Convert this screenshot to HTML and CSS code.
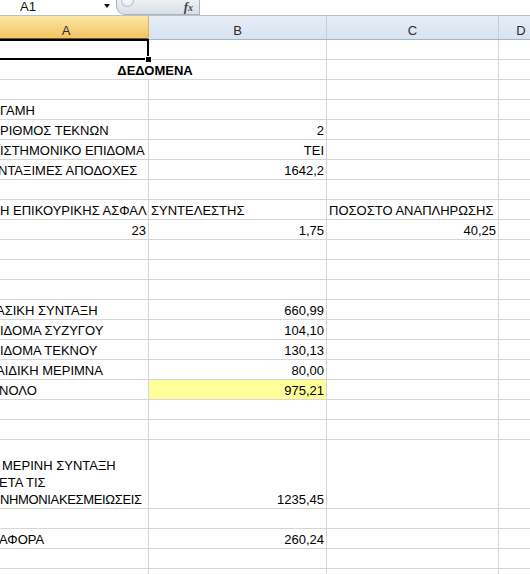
FILE: index.html
```html
<!DOCTYPE html>
<html lang="el">
<head>
<meta charset="utf-8">
<title>ΔΕΔΟΜΕΝΑ</title>
<link rel="stylesheet" href="styles.css">
</head>
<body>
<div class="formula-bar">
  <div class="namebox"><span class="name">A1</span><span class="arrow"></span></div>
  <div class="fx-cap"><span class="knob"></span><span class="fx">f<span class="fx-x">x</span></span></div>
  <div class="formula-input"></div>
</div>
<div class="sheet">
  <div class="hdr-row">
    <div class="hdr sel">A</div><div class="hdr">B</div><div class="hdr">C</div><div class="hdr">D</div>
  </div>
  <div class="row"><div class="c a1cell"><span class="selbox"></span><span class="handle"></span></div><div class="c"></div><div class="c"></div><div class="c"></div></div>
  <div class="row"><div class="c merged">ΔΕΔΟΜΕΝΑ</div><div class="c"></div><div class="c"></div></div>
  <div class="row"><div class="c"></div><div class="c"></div><div class="c"></div><div class="c"></div></div>
  <div class="row"><div class="c a0">ΓΑΜΗ</div><div class="c"></div><div class="c"></div><div class="c"></div></div>
  <div class="row"><div class="c a0">ΡΙΘΜΟΣ ΤΕΚΝΩΝ</div><div class="c r">2</div><div class="c"></div><div class="c"></div></div>
  <div class="row"><div class="c a0">ΙΣΤΗΜΟΝΙΚΟ ΕΠΙΔΟΜΑ</div><div class="c r">ΤΕΙ</div><div class="c"></div><div class="c"></div></div>
  <div class="row"><div class="c am2">ΝΤΑΞΙΜΕΣ ΑΠΟΔΟΧΕΣ</div><div class="c r">1642,2</div><div class="c"></div><div class="c"></div></div>
  <div class="row"><div class="c"></div><div class="c"></div><div class="c"></div><div class="c"></div></div>
  <div class="row"><div class="c a0">Η ΕΠΙΚΟΥΡΙΚΗΣ ΑΣΦΑΛ</div><div class="c">ΣΥΝΤΕΛΕΣΤΗΣ</div><div class="c">ΠΟΣΟΣΤΟ ΑΝΑΠΛΗΡΩΣΗΣ</div><div class="c"></div></div>
  <div class="row"><div class="c r">23</div><div class="c r">1,75</div><div class="c r">40,25</div><div class="c"></div></div>
  <div class="row"><div class="c"></div><div class="c"></div><div class="c"></div><div class="c"></div></div>
  <div class="row"><div class="c"></div><div class="c"></div><div class="c"></div><div class="c"></div></div>
  <div class="row"><div class="c"></div><div class="c"></div><div class="c"></div><div class="c"></div></div>
  <div class="row"><div class="c am4">ΑΣΙΚΗ ΣΥΝΤΑΞΗ</div><div class="c r">660,99</div><div class="c"></div><div class="c"></div></div>
  <div class="row"><div class="c a0">ΙΔΟΜΑ ΣΥΖΥΓΟΥ</div><div class="c r">104,10</div><div class="c"></div><div class="c"></div></div>
  <div class="row"><div class="c a0">ΙΔΟΜΑ ΤΕΚΝΟΥ</div><div class="c r">130,13</div><div class="c"></div><div class="c"></div></div>
  <div class="row"><div class="c am4">ΑΙΔΙΚΗ ΜΕΡΙΜΝΑ</div><div class="c r">80,00</div><div class="c"></div><div class="c"></div></div>
  <div class="row"><div class="c am1">ΝΟΛΟ</div><div class="c r fill">975,21</div><div class="c"></div><div class="c"></div></div>
  <div class="row"><div class="c"></div><div class="c"></div><div class="c"></div><div class="c"></div></div>
  <div class="row"><div class="c"></div><div class="c"></div><div class="c"></div><div class="c"></div></div>
  <div class="row tall"><div class="c a0 wrap"><span class="l1">ΜΕΡΙΝΗ ΣΥΝΤΑΞΗ</span><span class="l2">ΕΤΑ ΤΙΣ</span><span class="l3">ΝΗΜΟΝΙΑΚΕΣΜΕΙΩΣΕΙΣ</span></div><div class="c r">1235,45</div><div class="c"></div><div class="c"></div></div>
  <div class="row"><div class="c"></div><div class="c"></div><div class="c"></div><div class="c"></div></div>
  <div class="row"><div class="c am1">ΑΦΟΡΑ</div><div class="c r">260,24</div><div class="c"></div><div class="c"></div></div>
  <div class="row"><div class="c"></div><div class="c"></div><div class="c"></div><div class="c"></div></div>
  <div class="row"><div class="c"></div><div class="c"></div><div class="c"></div><div class="c"></div></div>
</div>
</body>
</html>
```
FILE: styles.css
```css
html, body {
  margin: 0;
  padding: 0;
}
body {
  width: 530px;
  height: 574px;
  overflow: hidden;
  background: #fff;
  font-family: "Liberation Sans", Arial, sans-serif;
  font-size: 13px;
  color: #000;
}

/* formula bar */
.formula-bar {
  display: flex;
  height: 16px;
  box-sizing: border-box;
  border-bottom: 1px solid #b9c2cc;
  background: #fff;
}
.namebox {
  width: 116px;
  display: flex;
  align-items: flex-start;
  box-sizing: border-box;
  padding-left: 20px;
}
.name {
  line-height: 14px;
  font-size: 13px;
  color: #111;
}
.arrow {
  margin-left: auto;
  margin-right: 6px;
  margin-top: 4px;
  width: 0;
  height: 0;
  border-left: 3.5px solid transparent;
  border-right: 3.5px solid transparent;
  border-top: 4px solid #111;
}
.fx-cap {
  position: relative;
  width: 84px;
  height: 15px;
  box-sizing: border-box;
  background: linear-gradient(#eef1f4, #d9dfe6);
  border: 1px solid #aab4c0;
  border-top: none;
  border-radius: 0 0 0 9px;
  display: flex;
  justify-content: flex-end;
  align-items: flex-start;
}
.knob {
  position: absolute;
  left: 4px;
  top: -5px;
  width: 11px;
  height: 10px;
  border-radius: 50%;
  background: radial-gradient(circle at 50% 40%, #fdfdfd, #dfe4ea);
  border: 1px solid #b9c2cc;
}
.fx {
  font-family: "Liberation Serif", "Times New Roman", serif;
  font-style: italic;
  font-weight: bold;
  font-size: 13px;
  line-height: 13px;
  color: #3e4752;
  margin-right: 6px;
}
.fx-x {
  font-size: 10px;
}
.formula-input {
  flex: 1;
}

/* sheet */
.sheet {
  margin-left: -16px;
  width: 560px;
}
.hdr-row,
.row {
  display: grid;
  grid-template-columns: 165px 178px 172px 1fr;
}
.hdr-row {
  height: 24px;
  background: linear-gradient(#e6edf7, #d8e3f0);
  border-bottom: 1px solid #9eb6ce;
  box-sizing: border-box;
}
.hdr {
  display: flex;
  justify-content: center;
  align-items: flex-end;
  line-height: 17px;
  font-size: 13px;
  color: #2b2b2b;
  border-right: 1px solid #c0cfdf;
}
.hdr.sel {
  background: linear-gradient(#fbe6a6, #f3c360);
  border-right: 1px solid #d9b25a;
  box-shadow: inset 0 -1px 0 #6d5a2c;
}
.row {
  height: 20px;
}
.row.tall {
  height: 69px;
}
.c {
  position: relative;
  box-sizing: border-box;
  border-right: 1px solid #d6d6d6;
  border-bottom: 1px solid #d6d6d6;
  display: flex;
  align-items: flex-end;
  line-height: 17px;
  padding: 0 2px;
  overflow: hidden;
  white-space: nowrap;
}
.c.r {
  justify-content: flex-end;
}
.c.merged {
  grid-column: span 2;
  justify-content: center;
  font-weight: bold;
}
.c.fill {
  background: #ffff99;
}
.c.a0 { padding-left: 16px; }
.c.am1 { padding-left: 15px; }
.c.am2 { padding-left: 14px; }
.c.am4 { padding-left: 12px; }
.c.wrap {
  flex-direction: column;
  justify-content: flex-end;
  align-items: flex-start;
}
.c.wrap .l1 { padding-left: 2px; }
.c.wrap .l2 { margin-left: -1px; }
.c.wrap .l3 { letter-spacing: -0.35px; }

/* selection of A1 */
.c.a1cell {
  overflow: visible;
  z-index: 2;
}
.selbox {
  position: absolute;
  left: -3px;
  top: -1px;
  width: 168px;
  height: 21px;
  box-sizing: border-box;
  border: 2px solid #000;
}
.handle {
  position: absolute;
  left: 161px;
  top: 16px;
  width: 7px;
  height: 7px;
  box-sizing: border-box;
  background: #000;
  border: 1px solid #fff;
}
```
